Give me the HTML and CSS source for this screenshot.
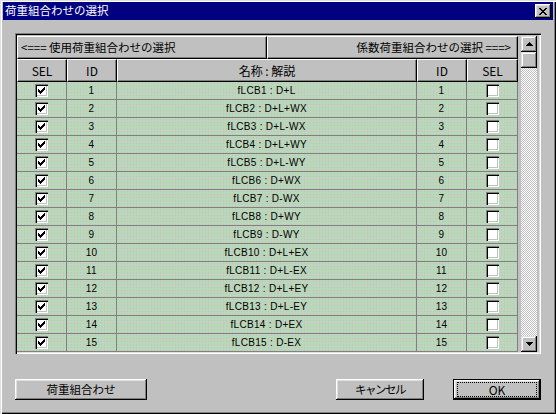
FILE: index.html
```html
<!DOCTYPE html>
<html lang="ja">
  <head>
    <meta charset="UTF-8" />
    <title>荷重組合わせの選択</title>
    <link rel="stylesheet" href="styles.css">
  </head>
  <body>
    <div class="window">
      <div class="titlebar">
        <span class="title">荷重組合わせの選択</span>
        <button class="close">
          <svg width="8" height="7" viewBox="0 0 8 7"><path d="M0 0h2v1H0z M6 0h2v1H6z M1 1h2v1H1z M5 1h2v1H5z M2 2h4v1H2z M3 3h2v1H3z M2 4h4v1H2z M1 5h2v1H1z M5 5h2v1H5z M0 6h2v1H0z M6 6h2v1H6z" fill="#000"/></svg>
        </button>
      </div>

      <div class="content">
        <div class="frame">
          <div class="table">
            <div class="head-top">
              <div class="hcell left">&lt;=== 使用荷重組合わせの選択</div>
              <div class="hcell right">係数荷重組合わせの選択 ===&gt;</div>
            </div>
            <div class="row head">
              <div class="hcell">SEL</div>
              <div class="hcell">ID</div>
              <div class="hcell">名称 : 解説</div>
              <div class="hcell">ID</div>
              <div class="hcell">SEL</div>
            </div>

            <div class="row"><div class="cell"><span class="box on"></span></div><div class="cell">1</div><div class="cell">fLCB1 : D+L</div><div class="cell">1</div><div class="cell"><span class="box"></span></div></div>
            <div class="row"><div class="cell"><span class="box on"></span></div><div class="cell">2</div><div class="cell">fLCB2 : D+L+WX</div><div class="cell">2</div><div class="cell"><span class="box"></span></div></div>
            <div class="row"><div class="cell"><span class="box on"></span></div><div class="cell">3</div><div class="cell">fLCB3 : D+L-WX</div><div class="cell">3</div><div class="cell"><span class="box"></span></div></div>
            <div class="row"><div class="cell"><span class="box on"></span></div><div class="cell">4</div><div class="cell">fLCB4 : D+L+WY</div><div class="cell">4</div><div class="cell"><span class="box"></span></div></div>
            <div class="row"><div class="cell"><span class="box on"></span></div><div class="cell">5</div><div class="cell">fLCB5 : D+L-WY</div><div class="cell">5</div><div class="cell"><span class="box"></span></div></div>
            <div class="row"><div class="cell"><span class="box on"></span></div><div class="cell">6</div><div class="cell">fLCB6 : D+WX</div><div class="cell">6</div><div class="cell"><span class="box"></span></div></div>
            <div class="row"><div class="cell"><span class="box on"></span></div><div class="cell">7</div><div class="cell">fLCB7 : D-WX</div><div class="cell">7</div><div class="cell"><span class="box"></span></div></div>
            <div class="row"><div class="cell"><span class="box on"></span></div><div class="cell">8</div><div class="cell">fLCB8 : D+WY</div><div class="cell">8</div><div class="cell"><span class="box"></span></div></div>
            <div class="row"><div class="cell"><span class="box on"></span></div><div class="cell">9</div><div class="cell">fLCB9 : D-WY</div><div class="cell">9</div><div class="cell"><span class="box"></span></div></div>
            <div class="row"><div class="cell"><span class="box on"></span></div><div class="cell">10</div><div class="cell">fLCB10 : D+L+EX</div><div class="cell">10</div><div class="cell"><span class="box"></span></div></div>
            <div class="row"><div class="cell"><span class="box on"></span></div><div class="cell">11</div><div class="cell">fLCB11 : D+L-EX</div><div class="cell">11</div><div class="cell"><span class="box"></span></div></div>
            <div class="row"><div class="cell"><span class="box on"></span></div><div class="cell">12</div><div class="cell">fLCB12 : D+L+EY</div><div class="cell">12</div><div class="cell"><span class="box"></span></div></div>
            <div class="row"><div class="cell"><span class="box on"></span></div><div class="cell">13</div><div class="cell">fLCB13 : D+L-EY</div><div class="cell">13</div><div class="cell"><span class="box"></span></div></div>
            <div class="row"><div class="cell"><span class="box on"></span></div><div class="cell">14</div><div class="cell">fLCB14 : D+EX</div><div class="cell">14</div><div class="cell"><span class="box"></span></div></div>
            <div class="row"><div class="cell"><span class="box on"></span></div><div class="cell">15</div><div class="cell">fLCB15 : D-EX</div><div class="cell">15</div><div class="cell"><span class="box"></span></div></div>
          </div>

          <div class="scrollbar">
            <div class="sbtn">
              <svg width="7" height="4" viewBox="0 0 7 4"><path d="M3 0h1v1H3z M2 1h3v1H2z M1 2h5v1H1z M0 3h7v1H0z" fill="#000"/></svg>
            </div>
            <div class="sbtn thumb"></div>
            <div class="track"></div>
            <div class="sbtn">
              <svg width="7" height="4" viewBox="0 0 7 4"><path d="M0 0h7v1H0z M1 1h5v1H1z M2 2h3v1H2z M3 3h1v1H3z" fill="#000"/></svg>
            </div>
          </div>
        </div>

        <div class="footer">
          <button class="btn wide">荷重組合わせ</button>
          <div class="spacer"></div>
          <button class="btn cancel">キャンセル</button>
          <button class="btn default">OK</button>
        </div>
      </div>
    </div>
  </body>
</html>
```

FILE: styles.css
```css
* {
  margin: 0;
  padding: 0;
  box-sizing: border-box;
}

body {
  background: #c0c0c0;
  font-family: "Noto Sans CJK JP", "Noto Sans", sans-serif;
  color: #000;
}

/* window chrome */
.window {
  width: 556px;
  height: 414px;
  padding: 2px 3px 3px 3px;
  background: #c0c0c0;
  box-shadow: inset 1px 1px #dfdfdf, inset 2px 2px #fff, inset -1px -1px #000, inset -2px -2px #808080;
}
.titlebar {
  height: 18px;
  background: #000080;
  color: #fff;
  display: flex;
  align-items: center;
  justify-content: space-between;
  padding: 0 2px 0 2px;
}
.title {
  font-size: 11.5px;
  line-height: 1;
}
.close {
  width: 16px;
  height: 14px;
  border: none;
  background: #c0c0c0;
  display: flex;
  align-items: center;
  justify-content: center;
  box-shadow: inset -1px -1px #000, inset 1px 1px #fff, inset -2px -2px #808080, inset 2px 2px #dfdfdf;
}

.content {
  padding: 13px 12px 0 12px;
}

/* grid frame */
.frame {
  width: 526px;
  height: 321px;
  padding: 3px 3px 2px 2px;
  display: flex;
  gap: 3px;
  overflow: hidden;
  box-shadow: inset 1px 1px #808080, inset 2px 2px #000, inset -1px -1px #fff, inset -2px -2px #dfdfdf;
}
.table {
  width: 501px;
  flex: none;
}
.head-top {
  display: flex;
  height: 23px;
}
.hcell {
  background: #c0c0c0;
  border-top: 1px solid #fff;
  border-left: 1px solid #fff;
  border-right: 1px solid #000;
  border-bottom: 1px solid #000;
  box-shadow: inset -1px -1px #808080;
  display: flex;
  align-items: center;
  justify-content: center;
  font-size: 12px;
  line-height: 1;
}
.head-top .hcell {
  width: 250px;
  font-size: 11.5px;
}
.head-top .hcell.right {
  width: 251px;
  justify-content: flex-end;
  padding-right: 6px;
}
.head-top .hcell.left {
  justify-content: flex-start;
  padding-left: 3px;
}

.row {
  display: grid;
  grid-template-columns: 50px 50px 300px 50px 51px;
  height: 18px;
}
.row.head {
  height: 23px;
}
.cell {
  border-right: 1px solid #808080;
  border-bottom: 1px solid #808080;
  background-color: #b9d8b9;
  background-image: radial-gradient(rgba(214, 176, 204, 0.8) 0.6px, transparent 0.8px);
  background-size: 3px 3px;
  display: flex;
  align-items: center;
  justify-content: center;
  font-family: "Liberation Sans", Arial, sans-serif;
  font-size: 10px;
  letter-spacing: 0.3px;
}

/* checkbox */
.box {
  width: 13px;
  height: 13px;
  background: #fff;
  box-shadow: inset 1px 1px #808080, inset 2px 2px #000, inset -1px -1px #fff, inset -2px -2px #c0c0c0;
  position: relative;
}
.box.on::after {
  content: "";
  position: absolute;
  left: 3px;
  top: 3px;
  width: 7px;
  height: 7px;
  background: url("data:image/svg+xml,%3Csvg xmlns='http://www.w3.org/2000/svg' width='7' height='7'%3E%3Cpath d='M6 0h1v1H6z M5 1h2v1H5z M0 2h1v1H0z M4 2h3v1H4z M0 3h2v1H0z M3 3h3v1H3z M0 4h5v1H0z M1 5h3v1H1z M2 6h1v1H2z' fill='%23000'/%3E%3C/svg%3E") no-repeat;
}

/* scrollbar */
.scrollbar {
  width: 16px;
  flex: none;
  display: flex;
  flex-direction: column;
  height: 316px;
}
.sbtn {
  height: 16px;
  flex: none;
  background: #c0c0c0;
  display: flex;
  align-items: center;
  justify-content: center;
  box-shadow: inset -1px -1px #000, inset 1px 1px #dfdfdf, inset -2px -2px #808080, inset 2px 2px #fff;
}
.track {
  flex: 1;
  background: repeating-conic-gradient(#c0c0c0 0 25%, #fff 0 50%) 0 0 / 2px 2px;
}

/* buttons */
.footer {
  display: flex;
  margin-top: 25px;
  padding-right: 0;
}
.spacer {
  flex: 1;
}
.btn {
  height: 21px;
  border: none;
  background: #c0c0c0;
  font-family: "Noto Sans CJK JP", sans-serif;
  font-size: 11.5px;
  line-height: 1;
  color: #000;
  box-shadow: inset -1px -1px #000, inset 1px 1px #fff, inset -2px -2px #808080, inset 2px 2px #dfdfdf;
}
.btn.wide {
  width: 132px;
}
.btn.cancel {
  width: 88px;
  letter-spacing: -1.5px;
  margin-right: 29px;
}
.btn.default {
  width: 88px;
  position: relative;
  font-size: 12px;
  border: 1px solid #000;
  box-shadow: inset -1px -1px #000, inset 1px 1px #fff, inset -2px -2px #808080, inset 2px 2px #dfdfdf;
}
.btn.default::after {
  content: "";
  position: absolute;
  left: 3px;
  top: 2px;
  right: 3px;
  bottom: 2px;
  border: 1px dotted #000;
}
```
